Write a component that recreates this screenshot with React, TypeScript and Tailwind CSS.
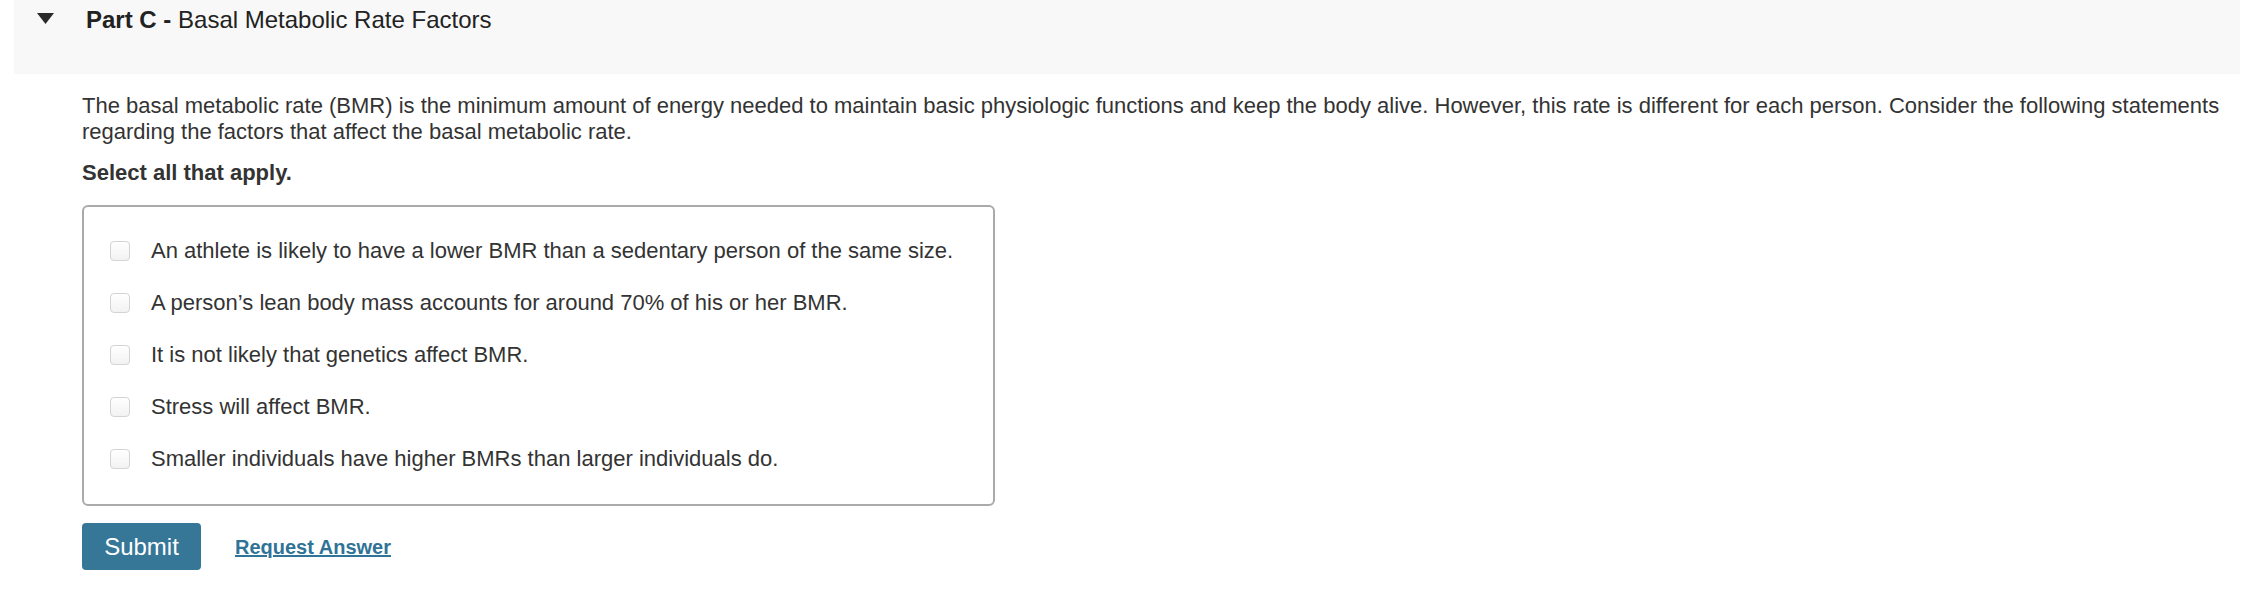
const options = [
  "An athlete is likely to have a lower BMR than a sedentary person of the same size.",
  "A person\u2019s lean body mass accounts for around 70% of his or her BMR.",
  "It is not likely that genetics affect BMR.",
  "Stress will affect BMR.",
  "Smaller individuals have higher BMRs than larger individuals do.",
];

export default function App() {
  return (
    <main className="min-h-[604px] w-full bg-white font-['Liberation_Sans',Arial,sans-serif] text-[#333]">
      {/* Part header */}
      <div className="ml-[14px] mr-[6px] flex h-[74px] items-start bg-[#f8f8f8] pt-[5px]">
        <svg
          className="ml-[23px] mt-[8px] h-[11px] w-[17px]"
          viewBox="0 0 17 11"
        >
          <path d="M0 0 H17 L8.5 11 Z" fill="#2a2a2a" />
        </svg>
        <h2 className="ml-[32px] text-[24px] leading-[29px] text-[#222]">
          <span className="font-bold">Part C -</span> Basal Metabolic Rate
          Factors
        </h2>
      </div>

      <section className="pl-[82px] pr-[16px]">
        <p className="mt-[19px] text-[22px] leading-[26px]">
          The basal metabolic rate (BMR) is the minimum amount of energy needed
          to maintain basic physiologic functions and keep the body alive.
          However, this rate is different for each person. Consider the
          following statements regarding the factors that affect the basal
          metabolic rate.
        </p>
        <p className="mt-[15px] text-[22px] font-bold leading-[26px]">
          Select all that apply.
        </p>

        {/* Choices */}
        <div className="mt-[19px] w-[913px] rounded-[6px] border-2 border-[#aaa] pb-[19px] pl-[26px] pt-[18px]">
          {options.map((opt, i) => (
            <label key={i} className="flex h-[52px] items-center">
              <span className="h-[20px] w-[20px] shrink-0 rounded-[4px] border border-[#d4d4d4] bg-gradient-to-b from-white to-[#f2f2f2]" />
              <span className="ml-[21px] text-[22px] leading-[26px]">
                {opt}
              </span>
            </label>
          ))}
        </div>

        {/* Actions */}
        <div className="mt-[17px] flex items-center">
          <button className="flex h-[47px] w-[119px] items-center justify-center rounded-[4px] bg-[#367798] text-[24px] text-white">
            Submit
          </button>
          <a className="ml-[34px] text-[20px] font-bold text-[#2f7397] underline">
            Request Answer
          </a>
        </div>
      </section>
    </main>
  );
}
